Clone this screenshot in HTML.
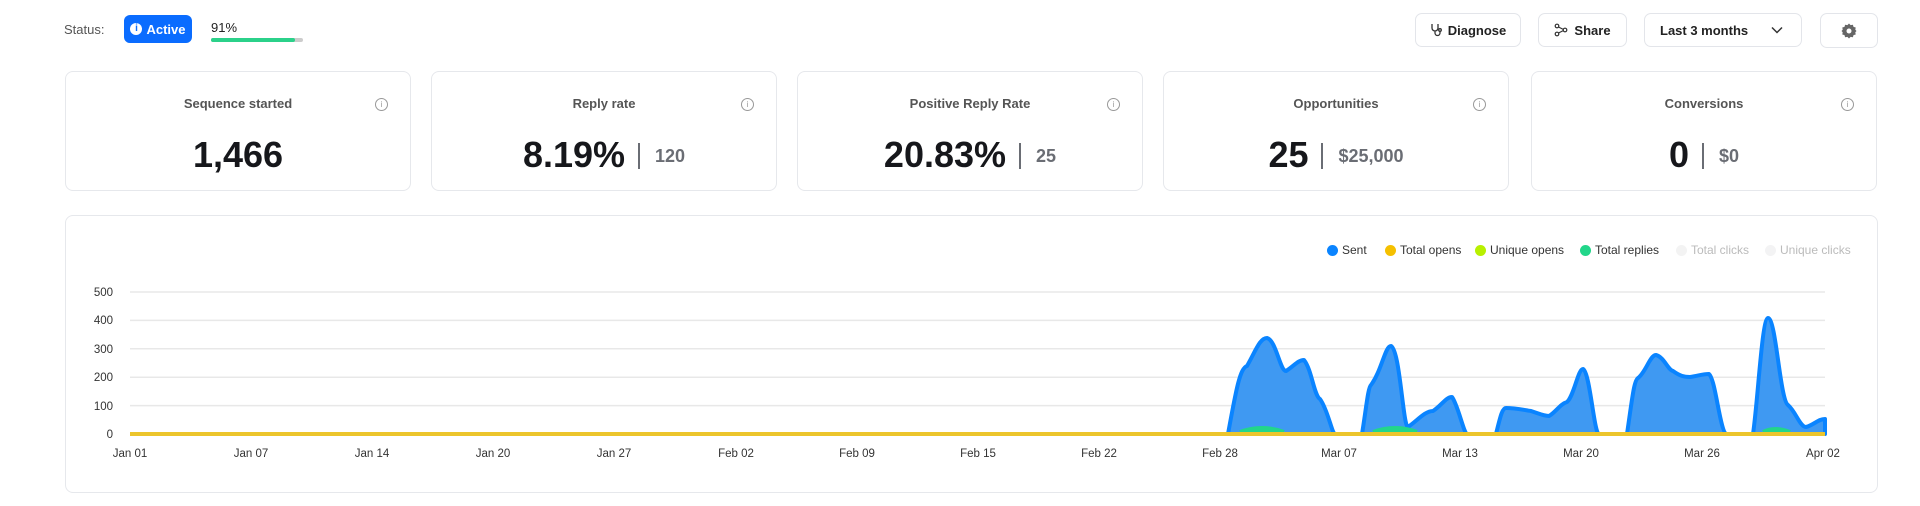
<!DOCTYPE html>
<html><head><meta charset="utf-8"><style>
*{box-sizing:border-box;margin:0;padding:0}
body{width:1920px;height:506px;background:#fff;font-family:"Liberation Sans",sans-serif;position:relative;overflow:hidden;color:#1c1d21}
.abs{position:absolute}
.btn{position:absolute;top:13px;height:34px;border:1px solid #e3e5ea;border-radius:7px;font-size:13px;font-weight:bold;color:#222;display:flex;align-items:center;justify-content:center;gap:6px}
.card{position:absolute;top:71px;width:346px;height:120px;border:1px solid #e6e8ec;border-radius:8px}
.card .t{position:absolute;top:24px;left:0;right:0;text-align:center;font-size:13px;color:#555;font-weight:bold}
.card .i{position:absolute;top:26px;right:22px;width:13px;height:13px;border:1px solid #999;border-radius:50%;font-size:8px;color:#999;text-align:center;line-height:11px}
.card .v{position:absolute;top:62px;left:0;right:0;text-align:center;font-size:36px;font-weight:bold;color:#16171b;white-space:nowrap}
.card .v span{font-size:18px;color:#6a6d74;font-weight:bold;vertical-align:5px}
.card .v b{display:inline-block;width:2px;height:26px;background:#6a6d74;margin:0 15px 0 13px;vertical-align:-2px}
.leg{position:absolute;top:243px;font-size:12px;color:#333;display:flex;align-items:center;gap:4px}
.leg i{width:11px;height:11px;border-radius:50%;display:inline-block}
</style></head><body>
<div class="abs" style="left:64px;top:22px;font-size:13px;color:#555">Status:</div>
<div class="abs" style="left:124px;top:15px;width:68px;height:28px;background:#0a6cff;border-radius:6px;color:#fff;font-size:13px;font-weight:bold;display:flex;align-items:center;justify-content:center;gap:4px"><span style="width:12px;height:12px;background:#fff;border-radius:50%;color:#0a6cff;font-size:10px;line-height:12px;text-align:center">i</span>Active</div>
<div class="abs" style="left:211px;top:20px;font-size:13px;color:#222">91%</div>
<div class="abs" style="left:211px;top:38px;width:92px;height:4px;background:#ccc;border-radius:2px"><div style="width:84px;height:4px;background:#2bd18a;border-radius:2px"></div></div>

<div class="btn" style="left:1415px;width:106px"><svg width="12" height="14" viewBox="0 0 12 14" fill="none" stroke="#333" stroke-width="1.3"><path d="M2 1v4a3 3 0 0 0 6 0V1M5 8v2a2.5 2.5 0 0 0 5 0V8"/><circle cx="10" cy="7" r="1.3"/></svg>Diagnose</div>
<div class="btn" style="left:1538px;width:89px"><svg width="14" height="14" viewBox="0 0 14 14" fill="none" stroke="#333" stroke-width="1.2"><circle cx="3" cy="3" r="1.8"/><circle cx="3" cy="11" r="1.8"/><circle cx="11" cy="7" r="1.8"/><path d="M4.5 4l5 2.5M4.5 10l5-2.5"/></svg>Share</div>
<div class="btn" style="left:1644px;width:158px;justify-content:space-between;padding:0 18px 0 15px">Last 3 months<svg width="12" height="8" viewBox="0 0 12 8" fill="none" stroke="#333" stroke-width="1.5"><path d="M1 1.5l5 5 5-5"/></svg></div>
<div class="btn" style="left:1820px;width:58px;height:35px"><svg width="16" height="16" viewBox="0 0 16 16"><path fill="#666" d="M8 0.5l1.6 1.6 2.3-.4.6 2.2 2.2.6-.4 2.3L15.5 8l-1.2 1.2.4 2.3-2.2.6-.6 2.2-2.3-.4L8 15.5l-1.6-1.6-2.3.4-.6-2.2-2.2-.6.4-2.3L.5 8l1.2-1.2-.4-2.3 2.2-.6.6-2.2 2.3.4z"/><circle cx="8" cy="8" r="2.5" fill="#fff"/></svg></div>

<div class="card" style="left:65px"><div class="t">Sequence started</div><div class="i">i</div><div class="v">1,466</div></div>
<div class="card" style="left:431px"><div class="t">Reply rate</div><div class="i">i</div><div class="v">8.19%<b></b><span>120</span></div></div>
<div class="card" style="left:797px"><div class="t">Positive Reply Rate</div><div class="i">i</div><div class="v">20.83%<b></b><span>25</span></div></div>
<div class="card" style="left:1163px"><div class="t">Opportunities</div><div class="i">i</div><div class="v">25<b></b><span>$25,000</span></div></div>
<div class="card" style="left:1531px"><div class="t">Conversions</div><div class="i">i</div><div class="v">0<b></b><span>$0</span></div></div>

<div class="abs" style="left:65px;top:215px;width:1813px;height:278px;border:1px solid #e6e8ec;border-radius:8px"></div>
<div class="leg" style="left:1327px"><i style="background:#0a84ff"></i>Sent</div>
<div class="leg" style="left:1385px"><i style="background:#f5c000"></i>Total opens</div>
<div class="leg" style="left:1475px"><i style="background:#b8f000"></i>Unique opens</div>
<div class="leg" style="left:1580px"><i style="background:#22d68a"></i>Total replies</div>
<div class="leg" style="left:1676px;color:#bbb"><i style="background:#f3f3f3"></i>Total clicks</div>
<div class="leg" style="left:1765px;color:#bbb"><i style="background:#f3f3f4"></i>Unique clicks</div>

<svg class="abs" style="left:0;top:0" width="1920" height="506">
<g stroke="#e8e8e8" stroke-width="1.5">
<line x1="130" x2="1825" y1="292" y2="292"/><line x1="130" x2="1825" y1="320.4" y2="320.4"/><line x1="130" x2="1825" y1="348.8" y2="348.8"/><line x1="130" x2="1825" y1="377.2" y2="377.2"/><line x1="130" x2="1825" y1="405.6" y2="405.6"/>
</g>
<g font-family="Liberation Sans" font-size="11.5" fill="#333" text-anchor="end">
<text x="113" y="296">500</text><text x="113" y="324">400</text><text x="113" y="353">300</text><text x="113" y="381">200</text><text x="113" y="410">100</text><text x="113" y="438">0</text>
</g>
<g font-family="Liberation Sans" font-size="11.5" fill="#333" text-anchor="middle">
<text x="130" y="457">Jan 01</text><text x="251" y="457">Jan 07</text><text x="372" y="457">Jan 14</text><text x="493" y="457">Jan 20</text><text x="614" y="457">Jan 27</text><text x="736" y="457">Feb 02</text><text x="857" y="457">Feb 09</text><text x="978" y="457">Feb 15</text><text x="1099" y="457">Feb 22</text><text x="1220" y="457">Feb 28</text><text x="1339" y="457">Mar 07</text><text x="1460" y="457">Mar 13</text><text x="1581" y="457">Mar 20</text><text x="1702" y="457">Mar 26</text><text x="1823" y="457">Apr 02</text>
</g>
<path d="M1228 434 C1236 390 1240 368 1247 366 C1256 350 1260 338 1267 338 C1276 340 1280 371 1286 371 C1294 366 1298 360 1304 360 C1312 370 1314 396 1320 399 C1328 410 1332 434 1335 434 L1362 434 C1366 410 1368 387 1371 385 C1382 370 1385 346 1391 346 C1400 350 1403 427 1408 427 C1418 420 1425 411 1433 411 C1442 405 1446 397 1452 397 C1458 405 1464 434 1467 434 L1496 434 C1500 418 1502 408 1506 408 C1516 408 1524 410 1531 411 C1540 414 1544 416 1549 416 C1556 412 1560 404 1567 402 C1574 396 1578 369 1583 369 C1590 372 1594 434 1599 434 L1627 434 C1632 400 1634 380 1638 378 C1646 372 1650 355 1656 355 C1664 357 1668 370 1673 371 C1680 376 1684 377 1690 377 C1698 376 1702 374 1709 374 C1716 380 1720 434 1727 434 L1753 434 C1758 400 1762 318 1768 318 C1776 318 1780 400 1788 405 C1796 412 1800 427 1806 427 C1814 425 1818 419 1825 419 L1825 434 Z" fill="#3f99f2" stroke="#0a84ff" stroke-width="4" stroke-linejoin="round"/>
<path d="M1240 432 Q1262 424 1284 432 M1373 432 Q1395 424 1417 432 M1763 432 Q1775 426 1790 432" stroke="#22d68a" stroke-width="4" fill="#22d68a"/>
<line x1="130" x2="1825" y1="434" y2="434" stroke="#ecc52c" stroke-width="4"/>
</svg>
</body></html>
